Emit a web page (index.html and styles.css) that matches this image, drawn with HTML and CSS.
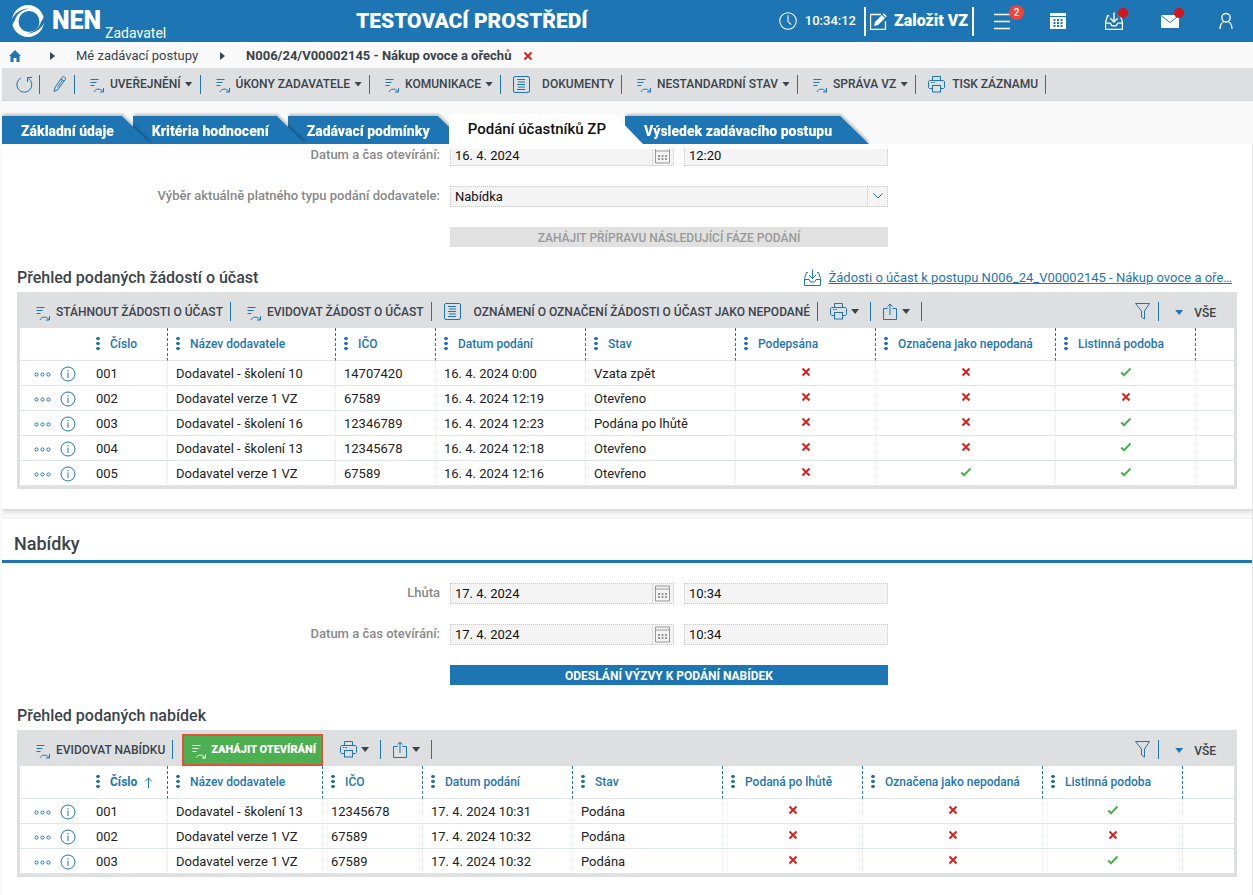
FILE: index.html
```html
<!DOCTYPE html>
<html lang="cs">
<head>
<meta charset="utf-8">
<meta name="viewport" content="width=device-width, initial-scale=1">
<title>NEN – Podání účastníků ZP</title>
<link rel="stylesheet" href="styles.css">
</head>
<body>
<svg class="sprite" aria-hidden="true">
  <symbol id="action" viewBox="0 0 15 18"><path d="M.5 4.500h8M.5 7.500h6M.5 10.500h4M4 17c1.500-3.500 6-4 9-.5M13.500 13v4H10" /></symbol>
  <symbol id="doc" viewBox="0 0 17 17"><rect x=".5" y=".5" width="16" height="16" rx="1.500"/><path d="M4 3.500h8M5 6h7M4 8.500h8M5 11h7M4 13.500h8"/></symbol>
  <symbol id="printer" viewBox="0 0 17 17"><path d="M4.500 4.500v-4h8v4M4.500 12.500h-3l-1-1v-6l1-1h14l1 1v6l-1 1h-3"/><rect x="4.500" y="9.500" width="8" height="6.500"/><path d="M3 6.500h1.500M5.500 6.500h1.500"/></symbol>
  <symbol id="share" viewBox="0 0 15 17"><path d="M4.500 5.500H.500v11h13v-11h-4M7 12V1M4.500 3.500L7 1l2.500 2.500"/></symbol>
  <symbol id="filter" viewBox="0 0 15 17"><path d="M.5.500h14L9.500 8v8l-3-2V8z"/></symbol>
  <symbol id="inbox" viewBox="0 0 17 17"><path d="M4 3.500H2.500L.500 9.500v7h16v-7l-2-6H13M.500 10.500H5l1.500 2.500h4L12 10.500h4.500M8.500.500v9M5 6l3.500 3.500L12 6"/></symbol>
  <symbol id="cal" viewBox="0 0 15 16"><path d="M.5.500h14v15H.500zM.500 3.500h14"/><path d="M3 8.500h9M3 11.500h9" stroke-width="2" stroke-dasharray="2 1.500"/></symbol>
  <symbol id="dots" viewBox="0 0 17 5"><circle cx="2.500" cy="2.500" r="1.600"/><circle cx="8.500" cy="2.500" r="1.600"/><circle cx="14.500" cy="2.500" r="1.600"/></symbol>
  <symbol id="info" viewBox="0 0 16 16"><circle cx="8" cy="8" r="7"/><path d="M8 6.500V12M8 4v1.300"/></symbol>
  <symbol id="no" viewBox="0 0 10 10"><path d="M1.500 1.500l7 7M8.500 1.500l-7 7"/></symbol>
  <symbol id="yes" viewBox="0 0 12 10"><path d="M1.200 5.500L4 8.300 10.500 1.500"/></symbol>
</svg>

<header class="top">
  <a class="brand" href="#">
    <svg class="logo" viewBox="0 0 32 32" aria-hidden="true"><path fill-rule="evenodd" d="M16 0a16 16 0 1 1 0 32a16 16 0 1 1 0-32zM17 6a10.500 10.500 0 1 0 0 21a10.500 10.500 0 0 0 0-21z"/><path class="notch" d="M0 14C3 8 8 4 17 3.500C9 5.500 5 9 3 15L0 20zM32 18c-3 6-8 10-17 10.500c8-2 12-5.500 14-11.500l3-5z"/></svg>
    <span class="brand-name">NEN</span><span class="brand-role">Zadavatel</span>
  </a>
  <div class="env">TESTOVACÍ PROSTŘEDÍ</div>
  <div class="tools">
    <svg class="clock" viewBox="0 0 17 17" aria-hidden="true"><circle cx="8.500" cy="8.500" r="7.800"/><path d="M8.500 3v6l3 3"/></svg>
    <time class="time">10:34:12</time>
    <a class="create" href="#"><svg viewBox="0 0 17 17" aria-hidden="true"><path class="line" d="M11 1.500H.500v15h15V8"/><path class="solid" d="M4 13l1-4 7-7 3 3-7 7zM12.800 1.200l1-1 3 3-1 1z"/></svg>Založit VZ</a>
    <button class="tool" aria-label="Seznam"><svg viewBox="0 0 18 18"><path class="line" d="M1 2.500h16M1 9.500h16M1 16.500h16"/></svg><span class="count">2</span></button>
    <button class="tool" aria-label="Kalendář"><svg viewBox="0 0 18 18"><path class="solid" d="M1 1h16v3H1zM1 5h16v12H1z"/><path class="hole" d="M4.500 8h9M4.500 11h9M4.500 14h9"/></svg></button>
    <button class="tool" aria-label="Přijaté"><svg class="line"><use href="#inbox"/></svg><span class="dot"></span></button>
    <button class="tool" aria-label="Zprávy"><svg viewBox="0 0 18 18"><path class="solid" d="M0 3h18v13H0z"/><path class="fold" d="M0 3.500l9 7 9-7"/></svg><span class="dot"></span></button>
    <button class="tool" aria-label="Uživatel"><svg viewBox="0 0 18 18"><path class="line" d="M9 1.500c6 0 5 8.500 0 8.500s-6-8.500 0-8.500zM3 17c0-4 1.500-6.500 4-7.500M15 17c0-4-1.500-6.500-4-7.500"/></svg></button>
  </div>
</header>

<nav class="crumbs" aria-label="Drobečková navigace">
  <a href="#" aria-label="Domů"><svg class="home" viewBox="0 0 12 12"><path d="M6 0l6 6h-1.500v6H7.500V8h-3v4h-3V6H0z"/></svg></a>
  <span class="arrow"></span>
  <a href="#">Mé zadávací postupy</a>
  <span class="arrow"></span>
  <strong>N006/24/V00002145 - Nákup ovoce a ořechů</strong>
  <button class="close" aria-label="Zavřít"><svg class="no"><use href="#no"/></svg></button>
</nav>

<div class="bar main-bar">
  <button class="cmd square" aria-label="Obnovit"><svg class="w17" viewBox="0 0 17 17"><path d="M5 2A7.500 7.500 0 1 0 12.500 2.500M16 1.500h-4.500V6"/></svg></button>
  <button class="cmd pencil" aria-label="Upravit"><svg class="w13" viewBox="0 0 13 17"><path d="M1 15.500l1.300-4.500L9 1.500c1.500-2 4.500 0 3.200 2L5 13.500zM9.500 4L4.500 11.500M8 3l3 2.200"/></svg></button>
  <button class="cmd"><svg class="act"><use href="#action"/></svg>UVEŘEJNĚNÍ<i class="caret"></i></button>
  <button class="cmd"><svg class="act"><use href="#action"/></svg>ÚKONY ZADAVATELE<i class="caret"></i></button>
  <button class="cmd"><svg class="act"><use href="#action"/></svg>KOMUNIKACE<i class="caret"></i></button>
  <button class="cmd docs"><svg class="w17"><use href="#doc"/></svg>DOKUMENTY</button>
  <button class="cmd"><svg class="act"><use href="#action"/></svg>NESTANDARDNÍ STAV<i class="caret"></i></button>
  <button class="cmd"><svg class="act"><use href="#action"/></svg>SPRÁVA VZ<i class="caret"></i></button>
  <button class="cmd print"><svg class="w17"><use href="#printer"/></svg>TISK ZÁZNAMU</button>
</div>

<nav class="tabs" aria-label="Záložky">
  <a class="tab" href="#"><span>Základní údaje</span></a>
  <a class="tab" href="#"><span>Kritéria hodnocení</span></a>
  <a class="tab" href="#"><span>Zadávací podmínky</span></a>
  <a class="tab active" href="#" aria-current="page"><span>Podání účastníků ZP</span></a>
  <a class="tab" href="#"><span>Výsledek zadávacího postupu</span></a>
</nav>

<main class="content">
<div class="scroll">
  <section class="panel first">
    <div class="form">
      <label for="d0">Datum a čas otevírání:</label>
      <div class="field"><input id="d0" value="16. 4. 2024" readonly><button class="pick" aria-label="Kalendář"><svg class="w15"><use href="#cal"/></svg></button></div>
      <div class="field"><input aria-label="Čas otevírání" value="12:20" readonly></div>
      <label for="typ">Výběr aktuálně platného typu podání dodavatele:</label>
      <div class="field wide"><select id="typ"><option>Nabídka</option></select><span class="drop"><svg viewBox="0 0 10 6"><path d="M.5.500L5 5 9.500.500"/></svg></span></div>
      <button class="submit" disabled>ZAHÁJIT PŘÍPRAVU NÁSLEDUJÍCÍ FÁZE PODÁNÍ</button>
    </div>
    <div class="grid-head">
      <h2>Přehled podaných žádostí o účast</h2>
      <svg class="w17 blue"><use href="#inbox"/></svg>
      <a class="download" href="#">Žádosti o účast k postupu N006_24_V00002145 - Nákup ovoce a oře…</a>
    </div>
    <div class="grid">
      <div class="bar">
        <button class="cmd"><svg class="act"><use href="#action"/></svg>STÁHNOUT ŽÁDOSTI O ÚČAST</button>
        <button class="cmd"><svg class="act"><use href="#action"/></svg>EVIDOVAT ŽÁDOST O ÚČAST</button>
        <button class="cmd docs"><svg class="w17"><use href="#doc"/></svg>OZNÁMENÍ O OZNAČENÍ ŽÁDOSTI O ÚČAST JAKO NEPODANÉ</button>
        <button class="cmd mini" aria-label="Tisk"><svg class="w17"><use href="#printer"/></svg><i class="caret"></i></button>
        <button class="cmd mini" aria-label="Export"><svg class="w15"><use href="#share"/></svg><i class="caret"></i></button>
        <button class="cmd filter" aria-label="Filtr"><svg class="w15"><use href="#filter"/></svg></button>
        <button class="view"><i class="caret"></i>VŠE</button>
      </div>
      <table>
        <colgroup><col class="c68"><col class="c80"><col class="c168"><col class="c100"><col class="c150"><col class="c150"><col class="c140"><col class="c180"><col class="c140"><col></colgroup>
        <thead><tr><td></td><th>Číslo</th><th>Název dodavatele</th><th>IČO</th><th>Datum podání</th><th>Stav</th><th>Podepsána</th><th>Označena jako nepodaná</th><th>Listinná podoba</th><td></td></tr></thead>
        <tbody data-rows="001|Dodavatel - školení 10|14707420|16. 4. 2024 0:00|Vzata zpět|nny;002|Dodavatel verze 1 VZ|67589|16. 4. 2024 12:19|Otevřeno|nnn;003|Dodavatel - školení 16|12346789|16. 4. 2024 12:23|Podána po lhůtě|nny;004|Dodavatel - školení 13|12345678|16. 4. 2024 12:18|Otevřeno|nny;005|Dodavatel verze 1 VZ|67589|16. 4. 2024 12:16|Otevřeno|nyy"></tbody>
      </table>
    </div>
  </section>

  <section class="panel">
    <h1>Nabídky</h1>
    <div class="form">
      <label for="d1">Lhůta</label>
      <div class="field"><input id="d1" value="17. 4. 2024" readonly><button class="pick" aria-label="Kalendář"><svg class="w15"><use href="#cal"/></svg></button></div>
      <div class="field"><input aria-label="Čas lhůty" value="10:34" readonly></div>
      <label for="d2">Datum a čas otevírání:</label>
      <div class="field"><input id="d2" value="17. 4. 2024" readonly><button class="pick" aria-label="Kalendář"><svg class="w15"><use href="#cal"/></svg></button></div>
      <div class="field"><input aria-label="Čas otevírání" value="10:34" readonly></div>
      <button class="submit">ODESLÁNÍ VÝZVY K PODÁNÍ NABÍDEK</button>
    </div>
    <div class="grid-head"><h2>Přehled podaných nabídek</h2></div>
    <div class="grid">
      <div class="bar">
        <button class="cmd"><svg class="act"><use href="#action"/></svg>EVIDOVAT NABÍDKU</button>
        <button class="open"><svg class="act"><use href="#action"/></svg>ZAHÁJIT OTEVÍRÁNÍ</button>
        <button class="cmd mini" aria-label="Tisk"><svg class="w17"><use href="#printer"/></svg><i class="caret"></i></button>
        <button class="cmd mini" aria-label="Export"><svg class="w15"><use href="#share"/></svg><i class="caret"></i></button>
        <button class="cmd filter" aria-label="Filtr"><svg class="w15"><use href="#filter"/></svg></button>
        <button class="view"><i class="caret"></i>VŠE</button>
      </div>
      <table>
        <colgroup><col class="c68"><col class="c80"><col class="c155"><col class="c100"><col class="c150"><col class="c150"><col class="c140"><col class="c180"><col class="c140"><col></colgroup>
        <thead><tr><td></td><th class="sorted">Číslo<svg viewBox="0 0 9 11"><path d="M4.500 11V1M1 4.500L4.500 1 8 4.500"/></svg></th><th>Název dodavatele</th><th>IČO</th><th>Datum podání</th><th>Stav</th><th>Podaná po lhůtě</th><th>Označena jako nepodaná</th><th>Listinná podoba</th><td></td></tr></thead>
        <tbody data-rows="001|Dodavatel - školení 13|12345678|17. 4. 2024 10:31|Podána|nny;002|Dodavatel verze 1 VZ|67589|17. 4. 2024 10:32|Podána|nnn;003|Dodavatel verze 1 VZ|67589|17. 4. 2024 10:32|Podána|nny"></tbody>
      </table>
    </div>
  </section>
</div>
</main>
<script src="app.js"></script>
</body>
</html>
```

FILE: styles.css
```css
:root { --blue: #1d75b4; --grey: #dedfe1; --ink: #3a434b; --line: #dfe6ea; }
* { box-sizing: border-box; }
body { margin: 0; height: 100vh; display: flex; flex-direction: column; overflow: hidden; background: #f9f9f9; color: var(--ink); font: 13px/18px Roboto, "Liberation Sans", sans-serif; }
button, input, select { margin: 0; padding: 0; border: 0; background: none; color: inherit; font: inherit; }
a { color: inherit; text-decoration: none; }
svg { flex: none; display: block; fill: none; }
.sprite { position: absolute; width: 0; height: 0; }
.act { width: 15px; height: 18px; }
.w13 { width: 13px; height: 17px; }
.w15 { width: 15px; height: 17px; }
.w17 { width: 17px; height: 17px; }
.blue { stroke: var(--blue); }

/* header */
.top { flex: none; height: 42px; display: grid; grid-template-columns: 356px 1fr auto; align-items: center; background: var(--blue); color: #fff; }
.brand { display: flex; align-items: center; height: 42px; padding-left: 12px; }
.logo { width: 32px; height: 32px; fill: #fff; }
.notch { fill: var(--blue); }
.brand-name { margin-left: 8px; font-size: 25px; font-weight: 900; }
.brand-role { align-self: flex-end; margin-left: 4px; font-size: 14px; }
.env { font-size: 21px; font-weight: 900; }
.tools { display: flex; align-items: center; padding-right: 18px; stroke: #fff; }
.clock { width: 18px; height: 18px; }
.time { margin-left: 8px; font-weight: 500; }
.create { display: flex; align-items: center; gap: 7px; height: 29px; margin: 0 19px 0 8px; padding: 0 4px; border: solid #fff; border-width: 0 2px; font-size: 16px; font-weight: 900; }
.create svg { width: 17px; height: 17px; }
.tool { position: relative; width: 18px; height: 18px; }
.tool + .tool { margin-left: 38px; }
.tool svg { width: 18px; height: 18px; }
.line { stroke: #fff; stroke-width: 1.3; }
.solid { fill: #fff; stroke: none; }
.hole { stroke: var(--blue); stroke-width: 2; stroke-dasharray: 2 1.500; }
.fold { stroke: var(--blue); }
.count { position: absolute; left: 16px; top: -7px; width: 15px; height: 15px; border-radius: 50%; background: #f44336; font: 500 10px/15px Roboto, sans-serif; }
.dot { position: absolute; left: 13px; top: -4px; width: 10px; height: 10px; border-radius: 50%; background: #d9141a; }

/* breadcrumbs */
.crumbs { flex: none; display: flex; align-items: center; height: 26px; padding: 1px 0 0 9px; }
.home { width: 12px; height: 12px; fill: var(--blue); }
.arrow { margin: 0 21px 0 29px; border: solid transparent; border-width: 4px 0 4px 5px; border-left-color: var(--ink); }
.crumbs a + .arrow ~ .arrow { margin-left: 22px; }
.crumbs strong { font-weight: 700; }
.close { margin-left: 12px; }

/* command bars */
.bar { display: flex; align-items: center; background: var(--grey); }
.main-bar { flex: none; height: 33px; margin-left: 2px; border-bottom: 1px solid #d3d4d6; }
.cmd { flex: none; display: flex; align-items: center; height: 19px; padding: 0 7px 0 15px; border-right: 1px solid var(--blue); font-size: 12px; font-weight: 500; white-space: nowrap; }
.cmd svg { stroke: var(--blue); margin-right: 5px; }
.caret { width: 8px; height: 5px; margin-left: 4px; background: currentColor; clip-path: polygon(0 0, 100% 0, 50% 100%); }
.grid .cmd { padding-left: 16px; }
.cmd.square { padding: 0 6px 0 14px; }
.cmd.pencil { padding: 0 8px 0 13px; }
.cmd.square svg, .cmd.pencil svg { margin: 0; }
.cmd.docs, .cmd.print, .grid .docs, .grid .mini { padding-left: 12px; }
.cmd.docs svg { margin-right: 13px; }
.main-bar .docs svg { margin-right: 12px; }
.cmd.print svg { margin-right: 7px; }
.cmd.mini { padding-right: 11px; }
.cmd.mini svg { margin-right: 0; }

/* tabs */
.tabs { flex: none; display: flex; align-items: flex-end; height: 43px; padding-left: 2px; overflow: hidden; }
.tab { position: relative; height: 28px; padding: 0 19px; color: #fff; font-size: 14px; font-weight: 900; line-height: 31px; filter: drop-shadow(1px -2px 1px rgba(0, 0, 0, .22)); }
.tab::before { content: ""; position: absolute; inset: 0 -18px 0 0; background: var(--blue); clip-path: polygon(0 0, calc(100% - 29px) 0, 100% 100%, 0 100%); }
.tab span { position: relative; }
.tab:nth-child(1) { z-index: 5; }
.tab:nth-child(2) { z-index: 4; }
.tab:nth-child(3) { z-index: 3; }
.tab.active { z-index: 6; height: 30px; color: #111; font-size: 15px; font-weight: 500; filter: none; }
.tab.active::before { background: #fff; }

/* content */
.content { flex: 1; min-height: 0; margin: 0 1px 0 2px; padding-top: 5px; background: #fff; box-shadow: 1px 0 0 #e4e4e4; }
.scroll { height: 100%; overflow: hidden; background: #f8f8f8; }
.panel { padding-bottom: 20px; background: #fff; box-shadow: 0 2px 5px rgba(0, 0, 0, .18); }
.panel + .panel { margin-top: 10px; min-height: 400px; }
.first .form { margin-top: -4px; padding-top: 0; }
h1 { margin: 0; padding: 13px 12px 4px; border-bottom: 3px solid var(--blue); font-size: 18px; font-weight: 500; line-height: 24px; }
h2 { margin: 0; font-size: 16px; font-weight: 500; }
.form { display: grid; grid-template-columns: 438px 224px 204px; gap: 20px 10px; padding-top: 20px; }
.form label { color: #888; font-weight: 500; line-height: 20px; text-align: right; }
.field { display: flex; height: 21px; border: 1px dotted #c8c8c8; background: #f4f4f4; color: #111; }
.wide { position: relative; grid-column: 2 / 4; }
.field input, .field select { flex: 1; min-width: 0; padding: 0 4px; appearance: none; outline: 0; }
.pick { width: 21px; border-left: 1px dotted #c8c8c8; stroke: #999; }
.pick svg { margin: 0 2px; }
.drop { position: absolute; right: 0; top: 0; width: 20px; height: 19px; padding: 6px 5px; border-left: 1px dotted #c8c8c8; stroke: var(--blue); pointer-events: none; }
.drop svg { width: 10px; height: 6px; }
.submit { grid-column: 2 / 4; height: 20px; padding-top: 1px; background: var(--blue); color: #fff; font-size: 12px; font-weight: 700; line-height: 20px; }
.submit:disabled { background: #e1e1e1; color: #999; font-weight: 500; }
.grid-head { display: flex; align-items: center; height: 45px; padding: 16px 20px 0 15px; }
.grid-head h2 { margin-right: auto; }
.grid-head svg { margin-right: 7px; }
.download { color: var(--blue); text-decoration: underline; white-space: nowrap; }

/* grids */
.grid { margin: 0 15px; border: 3px solid var(--grey); }
.grid .bar { height: 33px; }
.grid .filter { margin-left: auto; padding: 0 8px 0 0; }
.cmd.filter svg { margin: 0; }
.view { display: flex; align-items: center; gap: 11px; padding: 2px 18px 0 12px; font-size: 12px; font-weight: 500; }
.view .caret { color: var(--blue); }
.open { display: flex; align-items: center; height: 32px; margin: 0 5px 0 9px; padding: 0 5px 0 8px; border: 2px solid #e4503a; background: #4caf50; color: #fff; font-size: 11px; font-weight: 900; }
.open svg { margin-right: 4px; stroke: #fff; }
table { width: 100%; table-layout: fixed; border-collapse: separate; border-spacing: 0; background: #fff; color: #222; }
.c68 { width: 68px; } .c80 { width: 80px; } .c100 { width: 100px; } .c140 { width: 140px; }
.c150 { width: 150px; } .c155 { width: 155px; } .c168 { width: 168px; } .c180 { width: 180px; }
td, th { padding: 0 0 0 8px; border-bottom: 1px solid var(--line); text-align: left; white-space: nowrap; }
thead tr { height: 33px; }
tbody tr { height: 25px; }
th { position: relative; padding-left: 22px; border-right: 1px dashed var(--blue); color: var(--blue); font-size: 12px; font-weight: 500; }
th::before { content: ""; position: absolute; left: 8px; top: 8px; width: 4px; height: 15px; background: radial-gradient(circle, var(--blue) 1.500px, transparent 2px) 0 0 / 4px 5px; }
th.sorted { font-weight: 700; }
th svg { display: inline-block; width: 9px; height: 11px; margin-left: 7px; vertical-align: -2px; stroke: var(--blue); }
tbody td { padding-top: 2px; border-right: 1px dotted var(--line); }
tbody td:first-child, tbody td:last-child { border-right: 0; }
.acts { display: flex; align-items: center; gap: 9px; padding-left: 6px; stroke: var(--blue); }
.acts button { display: block; }
.more { width: 17px; height: 5px; }
.info { width: 16px; height: 16px; }
tbody .flag { padding: 0 0 2px; }
.no { width: 10px; height: 10px; margin: 0 auto; stroke: #dc2020; stroke-width: 2; }
.yes { width: 12px; height: 10px; margin: 0 auto; stroke: #4caf50; stroke-width: 2; }
```

FILE: app.js
```js
// Fills each grid body from its data-rows attribute.
const icon = (name, cls) => `<svg class="${cls}" aria-hidden="true"><use href="#${name}"/></svg>`;
document.querySelectorAll("tbody[data-rows]").forEach((body) => {
  body.innerHTML = body.dataset.rows.split(";").map((row) => {
    const cells = row.split("|");
    const flags = cells.pop();
    const actions = `<td><div class="acts"><button aria-label="Akce">${icon("dots", "more")}</button><button aria-label="Detail">${icon("info", "info")}</button></div></td>`;
    const text = cells.map((c) => `<td>${c}</td>`).join("");
    const marks = [...flags].map((f) => `<td class="flag">${f === "y" ? icon("yes", "yes") : icon("no", "no")}</td>`).join("");
    return `<tr>${actions}${text}${marks}<td></td></tr>`;
  }).join("");
});
```
